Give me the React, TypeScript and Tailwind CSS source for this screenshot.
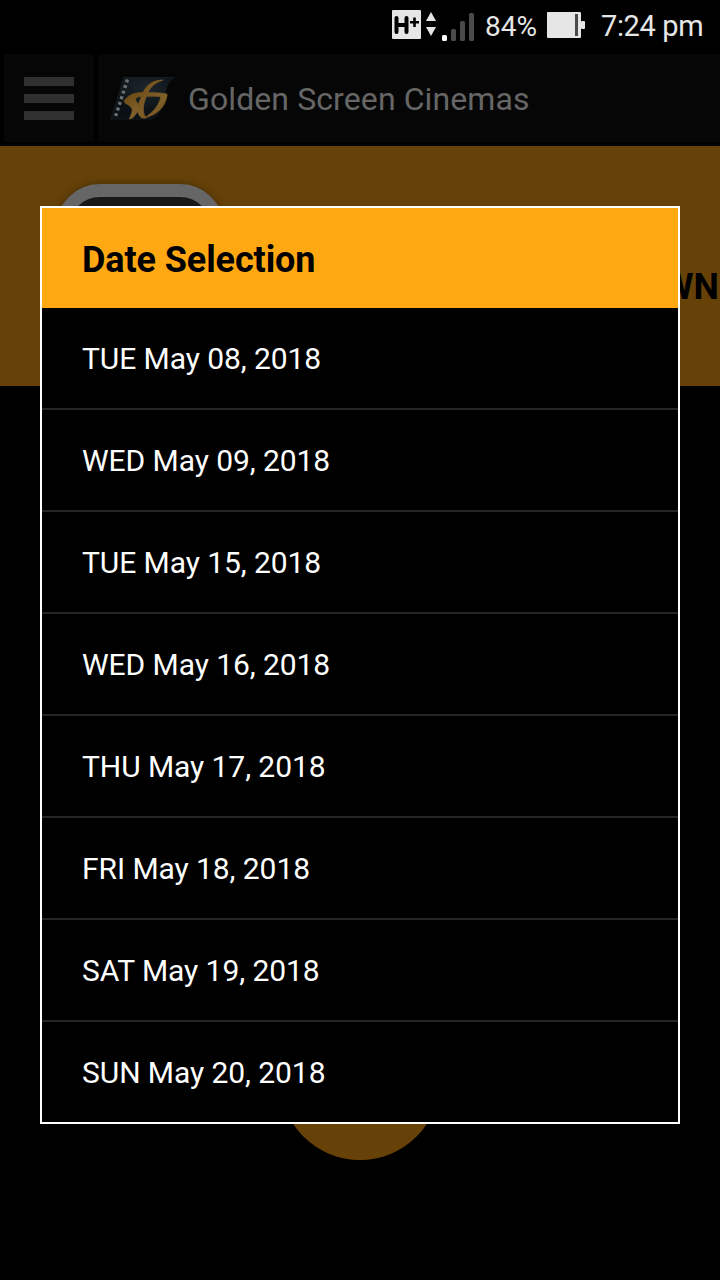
import { useState } from 'react';

const DATES = [
  'TUE May 08, 2018',
  'WED May 09, 2018',
  'TUE May 15, 2018',
  'WED May 16, 2018',
  'THU May 17, 2018',
  'FRI May 18, 2018',
  'SAT May 19, 2018',
  'SUN May 20, 2018',
];

function StatusBar() {
  return (
    <div className="flex h-[54px] pl-[392px] pt-2 text-[29px] leading-[37px] text-[#e6e6e6]">
      <svg className="mt-0.5 h-[34px] w-[84px] shrink-0" viewBox="0 0 84 34">
        <rect width="29" height="29" rx="1" fill="#e6e6e6" />
        <path d="M4.5 8v14M14.5 8v14M4.5 15h10" fill="none" stroke="#000" strokeWidth="4" strokeLinecap="round" />
        <path d="M22.5 7.5v9.5M18 12.2h9" fill="none" stroke="#000" strokeWidth="2.6" />
        <path d="M39 2l5 9H34zM39 26l5-9H34z" fill="#e6e6e6" />
        <rect x="50" y="25" width="5" height="6" rx="1.5" fill="#fff" />
        <rect x="59" y="19" width="5" height="12" rx="1.5" fill="#4a4a4a" />
        <rect x="68" y="11" width="5" height="20" rx="1.5" fill="#4a4a4a" />
        <rect x="77" y="3" width="5" height="28" rx="1.5" fill="#4a4a4a" />
      </svg>
      <span className="ml-[9px] w-[62px] shrink-0 whitespace-nowrap text-[28px]">84%</span>
      <svg className="mt-1 h-[26px] w-[38px] shrink-0" viewBox="0 0 38 26">
        <rect width="34" height="26" rx="1" fill="#e6e6e6" />
        <rect x="28" y="2" width="3" height="22" fill="#4a4a4a" />
        <rect x="34" y="9" width="4" height="8" rx="1" fill="#e6e6e6" />
      </svg>
      <span className="ml-4 whitespace-nowrap tracking-[-0.35px]">7:24 pm</span>
    </div>
  );
}

function Logo() {
  return (
    <svg className="h-[45px] w-[66px]" viewBox="0 0 66 45">
      <defs>
        <radialGradient id="film" cx="0.55" cy="0.25" r="0.6">
          <stop offset="0" stopColor="#1d262d" />
          <stop offset="1" stopColor="#0a1015" />
        </radialGradient>
        <linearGradient id="gold" x1="0" x2="1" y1="0" y2="1">
          <stop offset="0" stopColor="#6b450f" />
          <stop offset="0.5" stopColor="#80602a" />
          <stop offset="1" stopColor="#68420c" />
        </linearGradient>
      </defs>
      <path d="M14 1.500h50c-8 7-8 14-10 23-2 10-5 17-11 18.500H1z" fill="url(#film)" />
      <path d="M64 1.500H14L1 43h42" fill="none" stroke="#20282e" strokeWidth="0.6" />
      <path d="M17.500 3.500L5 42" stroke="#6b7073" strokeWidth="3.400" strokeDasharray="3 2.900" />
      <g fill="url(#gold)" stroke="url(#gold)" strokeWidth="0.7">
        {/* tall sweep of the G */}
        <path d="M53 4C42 4 35 10 32 19c-2 6-5 9-4 15 0 4 1 6 4 8h4c-4-6-3-13 0-21C39 12 44 7 53 4z" />
        {/* long crossbar running into the S */}
        <path d="M14 25c4-6 10-8.500 19-8.500 9 0 17 .2 24 1.500l-.5 3c-8-1-18-1-25-.5-6 .5-7 2-5 5 3 5 3 9-1 13-2 3-3 4-6 4.500 1-4 4-8 2-11-2-4-6-3-7.500-7z" />
        {/* right bowl */}
        <path d="M51 19h6c-1 11-9 20-23 23 10-6 16-14 17-23z" />
      </g>
    </svg>
  );
}

function AppBar() {
  return (
    <div className="flex h-[88px] gap-1 bg-black pl-1">
      <div className="flex w-[90px] flex-col justify-center gap-2 bg-[#060606] pl-5">
        <span className="h-[9px] w-[50px] bg-[#303030]" />
        <span className="h-[9px] w-[50px] bg-[#303030]" />
        <span className="h-[9px] w-[50px] bg-[#303030]" />
      </div>
      <div className="flex flex-1 items-center bg-[#060606] pl-3">
        <Logo />
        <span className="ml-3 pt-0.5 text-[32px] tracking-[0.1px] text-[#666]">Golden Screen Cinemas</span>
      </div>
    </div>
  );
}

export default function App() {
  const [selected, setSelected] = useState<string | null>(null);

  return (
    <div className="relative h-[1280px] w-[720px] overflow-hidden bg-black font-['Roboto',sans-serif]">
      <StatusBar />
      <AppBar />

      {/* dimmed page behind the dialog */}
      <div className="mt-1 flex h-60 items-start justify-between bg-[#664208] pl-14 pt-[38px]">
        <div className="h-[190px] w-[168px] rounded-[44px] border-[13px] border-[#666] bg-[#181818] shadow-[0_0_8px_rgba(0,0,0,0.35)]" />
        <span className="mr-px mt-[82px] text-[36px] font-bold leading-[42px] text-black">WN</span>
      </div>
      <div className="mx-auto mt-[614px] size-40 rounded-full bg-[#664208]" />

      <div className="absolute left-10 top-[206px] w-[640px] border-2 border-white bg-black">
        <h2 className="flex h-[100px] items-center bg-[#ffa812] pl-10 pt-1 text-[36px] font-bold tracking-[-0.1px] text-black">
          Date Selection
        </h2>
        <ul className="divide-y-2 divide-[#262626]">
          {DATES.map((date) => (
            <li key={date}>
              <button
                onClick={() => setSelected(date)}
                aria-pressed={selected === date}
                className="flex h-[100px] w-full items-center pl-10 text-left text-[30px] tracking-[-0.07px] text-white"
              >
                {date}
              </button>
            </li>
          ))}
        </ul>
      </div>
    </div>
  );
}
